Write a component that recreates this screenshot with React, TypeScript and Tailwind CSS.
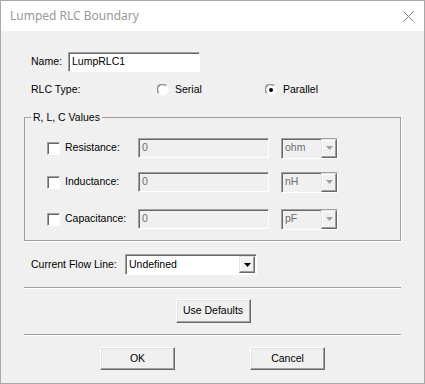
import React from "react";

const font = { fontFamily: '"Liberation Sans", Arial, sans-serif' };

function Sunken({ className = "", children }: { className?: string; children?: React.ReactNode }) {
  return (
    <div
      className={`border border-t-[#a0a0a0] border-l-[#a0a0a0] border-r-white border-b-white shadow-[inset_1px_1px_0_#696969] ${className}`}
    >
      {children}
    </div>
  );
}

function Arrow({ disabled }: { disabled?: boolean }) {
  return (
    <svg width="7" height="4" viewBox="0 0 7 4">
      <path d="M0 0h7L3.5 4z" fill={disabled ? "#a0a0a0" : "#000"} />
    </svg>
  );
}

function ComboButton({ disabled }: { disabled?: boolean }) {
  return (
    <div className="ml-auto flex h-full w-[16px] items-center justify-center border border-t-[#e3e3e3] border-l-[#e3e3e3] border-r-[#696969] border-b-[#696969] bg-[#f0f0f0] shadow-[inset_-1px_-1px_0_#a0a0a0,inset_1px_1px_0_#fff]">
      <Arrow disabled={disabled} />
    </div>
  );
}

function Radio({ checked }: { checked?: boolean }) {
  return (
    <svg width="12" height="12" viewBox="0 0 12 12">
      <circle cx="6" cy="6" r="5.5" fill="#fff" />
      <path d="M1.2 9.5A5.5 5.5 0 0 1 9.5 1.2" stroke="#a0a0a0" strokeWidth="1" fill="none" />
      <path d="M2 8.7A4.5 4.5 0 0 1 8.7 2" stroke="#696969" strokeWidth="1" fill="none" />
      <path d="M10.8 2.5A5.5 5.5 0 0 1 2.5 10.8" stroke="#f0f0f0" strokeWidth="1" fill="none" />
      {checked && <circle cx="6" cy="6" r="2" fill="#000" />}
    </svg>
  );
}

function Check() {
  return <Sunken className="h-[13px] w-[13px] bg-white" />;
}

function Button({ label, w, h }: { label: string; w: string; h: string }) {
  return (
    <div
      className={`${w} ${h} flex items-center justify-center border border-t-white border-l-white border-r-[#696969] border-b-[#696969] bg-[#f0f0f0] text-[10.5px] text-black shadow-[inset_-1px_-1px_0_#a0a0a0,inset_1px_1px_0_#e3e3e3]`}
    >
      {label}
    </div>
  );
}

function Separator() {
  return <div className="mx-[23px] h-[2px] border-t border-t-[#a0a0a0] border-b border-b-white" />;
}

function ValueRow({ label, unit, mt }: { label: string; unit: string; mt: string }) {
  return (
    <div className={`${mt} flex h-[20px] items-center`}>
      <div className="ml-[22px] w-[18px]">
        <Check />
      </div>
      <span className="w-[73px]">{label}</span>
      <Sunken className="flex h-[20px] w-[131px] items-center bg-[#f0f0f0] pl-[3px] text-[#6d6d6d]">0</Sunken>
      <Sunken className="ml-[12px] flex h-[21px] w-[57px] items-center bg-[#f0f0f0] pl-[3px] text-[#6d6d6d]">
        <span>{unit}</span>
        <ComboButton disabled />
      </Sunken>
    </div>
  );
}

export default function App() {
  return (
    <div className="h-[384px] w-[425px] overflow-hidden border border-[#a9a9a9] bg-[#f0f0f0] text-[10.5px] text-black" style={font}>
      {/* title bar */}
      <div className="flex h-[30px] items-center justify-between bg-white pl-[9px] pr-[10px]">
        <span className="text-[12px] text-[#999999]" style={{ fontFamily: '"Noto Sans", "Open Sans", sans-serif' }}>
          Lumped RLC Boundary
        </span>
        <svg width="11" height="11" viewBox="0 0 11 11">
          <path d="M0.5 0.5l10 10M10.5 0.5l-10 10" stroke="#808080" strokeWidth="1" />
        </svg>
      </div>

      {/* name */}
      <div className="mt-[21px] flex h-[20px] items-center pl-[30px]">
        <span className="w-[37px]">Name:</span>
        <Sunken className="flex h-[20px] w-[132px] items-center bg-white pl-[3px]">LumpRLC1</Sunken>
      </div>

      {/* RLC type */}
      <div className="mt-[11px] flex h-[13px] items-center pl-[30px]">
        <span className="w-[126px]">RLC Type:</span>
        <div className="flex w-[108px] items-center gap-[6px]">
          <Radio />
          <span>Serial</span>
        </div>
        <div className="flex items-center gap-[6px]">
          <Radio checked />
          <span>Parallel</span>
        </div>
      </div>

      {/* R, L, C values */}
      <fieldset className="mx-[23px] mt-[14px] border border-[#a0a0a0] pb-[11px] shadow-[1px_1px_0_#fff]">
        <legend className="ml-[6px] px-[2px] leading-[14px]">R, L, C Values</legend>
        <ValueRow label="Resistance:" unit="ohm" mt="mt-[14px]" />
        <ValueRow label="Inductance:" unit="nH" mt="mt-[14px]" />
        <ValueRow label="Capacitance:" unit="pF" mt="mt-[17px]" />
      </fieldset>

      {/* current flow line */}
      <div className="mt-[13px] flex h-[21px] items-center pl-[30px]">
        <span className="w-[94px]">Current Flow Line:</span>
        <Sunken className="flex h-[21px] w-[132px] items-center bg-white pl-[3px] pr-[1px] py-[1px]">
          <span>Undefined</span>
          <ComboButton />
        </Sunken>
      </div>

      <div className="mt-[12px]">
        <Separator />
      </div>

      <div className="mt-[10px] flex justify-center pl-[1px]">
        <Button label="Use Defaults" w="w-[75px]" h="h-[24px]" />
      </div>

      <div className="mt-[11px]">
        <Separator />
      </div>

      <div className="mt-[11px] flex justify-center gap-[75px]">
        <Button label="OK" w="w-[75px]" h="h-[23px]" />
        <Button label="Cancel" w="w-[75px]" h="h-[23px]" />
      </div>
    </div>
  );
}
